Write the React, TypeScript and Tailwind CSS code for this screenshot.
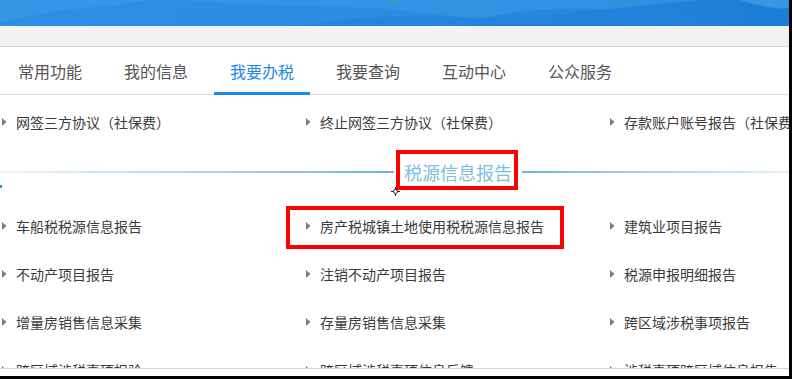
import React from 'react';

const tabs = ['常用功能', '我的信息', '我要办税', '我要查询', '互动中心', '公众服务'];

const topRow = ['网签三方协议（社保费）', '终止网签三方协议（社保费）', '存款账户账号报告（社保费）'];

const rows = [
  ['车船税税源信息报告', '房产税城镇土地使用税税源信息报告', '建筑业项目报告'],
  ['不动产项目报告', '注销不动产项目报告', '税源申报明细报告'],
  ['增量房销售信息采集', '存量房销售信息采集', '跨区域涉税事项报告'],
  ['跨区域涉税事项报验', '跨区域涉税事项信息反馈', '涉税事项跨区域信息报告'],
];

function Arrow() {
  return (
    <svg width="5" height="8" viewBox="0 0 5 8" className="shrink-0">
      <path d="M0 0 L4.5 4 L0 8 Z" fill="#7a7a7a" />
    </svg>
  );
}

function Item({ label, boxed }: { label: string; boxed?: boolean }) {
  return (
    <div className="relative flex h-[48px] items-center pl-[2px]">
      <Arrow />
      <span className="ml-[9px] whitespace-nowrap text-[14px] text-[#3a3a3a]">{label}</span>
      {boxed && (
        <div className="pointer-events-none absolute left-[-18px] top-[4px] h-[43px] w-[278px] border-[4px] border-[#ff0000]" />
      )}
    </div>
  );
}

function Row({ items, boxIndex }: { items: string[]; boxIndex?: number }) {
  return (
    <div className="grid grid-cols-[304px_304px_1fr]">
      {items.map((label, i) => (
        <Item key={label} label={label} boxed={boxIndex === i} />
      ))}
    </div>
  );
}

function Banner() {
  return (
    <div className="relative h-[26px] overflow-hidden bg-gradient-to-r from-[#2c8fe2] via-[#2a8de0] to-[#1b7dd5]">
      <svg width="789" height="26" viewBox="0 0 789 26" className="absolute inset-0">
        <path d="M0 22 C40 14 70 8 110 6 L150 0 L0 0 Z" fill="#3b9be6" opacity="0.6" />
        <path d="M180 0 C260 8 330 4 400 10 C450 18 500 20 560 14 C600 10 640 6 700 0 Z" fill="#3a9ae6" opacity="0.55" />
        <path d="M300 26 C360 16 420 12 480 20 C520 8 580 6 640 12 C680 18 700 22 720 26 Z" fill="#2283d8" opacity="0.7" />
        <path d="M740 0 C760 6 775 10 789 8 L789 0 Z" fill="#5aaeec" opacity="0.5" />
      </svg>
      <div className="absolute left-[393px] top-0 h-[2px] w-[3px] bg-[#22c55e]" />
    </div>
  );
}

export default function App() {
  return (
    <div
      className="flex h-[379px] w-[792px] flex-col overflow-hidden bg-black"
      style={{ fontFamily: '"Noto Sans CJK SC", "Noto Sans", sans-serif' }}
    >
      <div className="flex h-[376px]">
        <div className="flex w-[789px] flex-col bg-white">
          <div className="h-[369px] overflow-hidden border-b border-[#d4d4d4]">
            <Banner />
            <div className="h-[21px] border-b border-[#d9d9d9] bg-[#f2f2f2]" />

            {/* tabs */}
            <div className="flex h-[48px] gap-[10px] border-b border-[#dcdcdc] pl-[2px]">
              {tabs.map((t, i) => (
                <div
                  key={t}
                  className={
                    i === 2
                      ? 'mb-[-1px] flex w-[96px] items-center justify-center border-b-[3px] border-[#1e88e5] pt-[3px] text-[16px] text-[#1e88e5]'
                      : 'flex w-[96px] items-center justify-center text-[16px] text-[#555555]'
                  }
                >
                  {t}
                </div>
              ))}
            </div>

            <div className="pt-[3px]">
              <Row items={topRow} />
            </div>

            {/* section header */}
            <div className="relative mt-[3px] flex h-[46px] items-center">
              <div className="h-[2px] w-[394px] bg-gradient-to-r from-[#eef6fb] to-[#6fb4dc]" />
              <div className="flex w-[128px] justify-center text-[18px] text-[#7dbde2]">税源信息报告</div>
              <div className="h-[2px] flex-1 bg-gradient-to-r from-[#6fb4dc] to-[#e4f1f9]" />
              <div className="pointer-events-none absolute left-[396px] top-[1px] h-[40px] w-[122px] border-[4px] border-[#ff0000]" />
              <div className="absolute left-0 top-[36px] h-[3px] w-[2px] bg-[#1e9be6]" />
              <svg width="9" height="9" viewBox="0 0 9 9" className="absolute left-[391px] top-[38px]">
                <path d="M4.5 0 V9 M0 4.5 H9" stroke="#222" strokeWidth="1" />
                <circle cx="4.5" cy="4.5" r="2" fill="white" stroke="#222" strokeWidth="1" />
              </svg>
            </div>

            <div className="pt-[7px]">
              {rows.map((r, i) => (
                <Row key={i} items={r} boxIndex={i === 0 ? 1 : undefined} />
              ))}
            </div>
          </div>
        </div>
        <div className="w-[3px] bg-black" />
      </div>
    </div>
  );
}
